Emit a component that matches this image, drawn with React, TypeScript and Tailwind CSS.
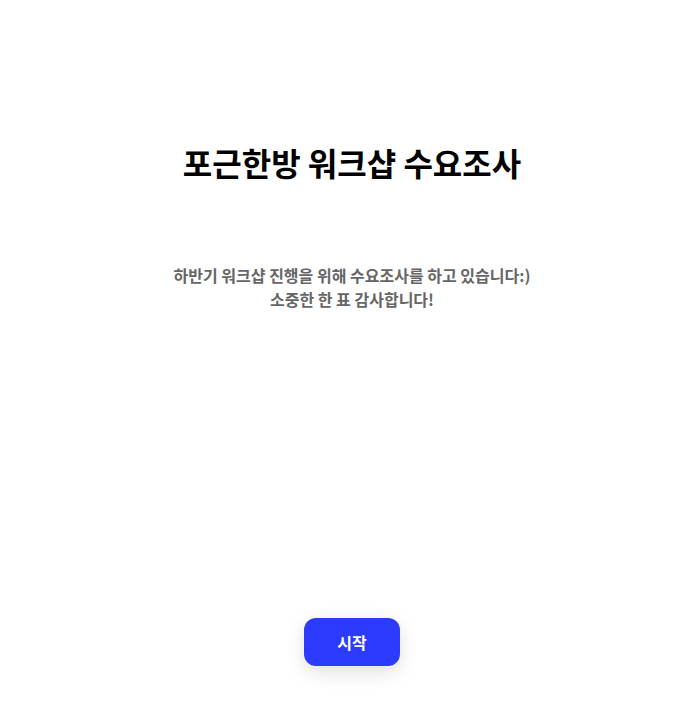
import React from 'react';

const font = { fontFamily: '"Noto Sans CJK KR", "Noto Sans", sans-serif' };

const SurveyIntro = () => {
  const handleStart = () => {
    console.log('start');
  };

  return (
    <div className="flex min-h-[705px] flex-col items-center bg-white pl-3" style={font}>
      <h1 className="mt-[138px] text-[32px] font-bold leading-[48px] text-black">
        포근한방 워크샵 수요조사
      </h1>
      <p className="mt-[77px] text-center text-base font-bold leading-6 text-[#666666]">
        하반기 워크샵 진행을 위해 수요조사를 하고 있습니다:)
        <br />
        소중한 한 표 감사합니다!
      </p>
      <button
        type="button"
        onClick={handleStart}
        className="mt-auto mb-[39px] h-12 w-24 rounded-xl bg-[#2b3cff] text-base font-bold text-white shadow-[0_6px_20px_rgba(0,0,0,0.12)]"
      >
        시작
      </button>
    </div>
  );
};

export default SurveyIntro;
